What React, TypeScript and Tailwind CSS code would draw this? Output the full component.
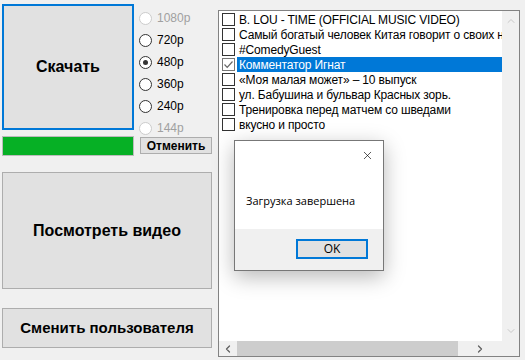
import { ChevronDown, ChevronLeft, ChevronRight, ChevronUp, X } from 'lucide-react';

const qualities = [
  { label: '1080p', disabled: true, checked: false },
  { label: '720p', disabled: false, checked: false },
  { label: '480p', disabled: false, checked: true },
  { label: '360p', disabled: false, checked: false },
  { label: '240p', disabled: false, checked: false },
  { label: '144p', disabled: true, checked: false }
];

const videos = [
  { title: 'B. LOU - TIME (OFFICIAL MUSIC VIDEO)', checked: false },
  { title: 'Самый богатый человек Китая говорит о своих неудачах', checked: false },
  { title: '#ComedyGuest', checked: false },
  { title: 'Комментатор Игнат', checked: true },
  { title: '«Моя малая может» – 10 выпуск', checked: false },
  { title: 'ул. Бабушина и бульвар Красных зорь.', checked: false },
  { title: 'Тренировка перед матчем со шведами', checked: false },
  { title: 'вкусно и просто', checked: false }
];

function Radio({ label, disabled, checked }: { label: string; disabled: boolean; checked: boolean }) {
  return (
    <div className="flex h-[22px] shrink-0 items-center gap-[5px]">
      <span
        className={`flex h-[13px] w-[13px] items-center justify-center rounded-full border bg-white ${
          disabled ? 'border-[#cccccc]' : 'border-[#333333]'
        }`}
      >
        {checked && <span className="h-[5px] w-[5px] rounded-full bg-[#333333]" />}
      </span>
      <span className={`text-[12px] ${disabled ? 'text-[#a0a0a0]' : 'text-black'}`}>{label}</span>
    </div>
  );
}

export default function App() {
  return (
    <div
      className="relative flex h-[360px] w-[525px] overflow-hidden bg-[#f0f0f0] text-black"
      style={{ fontFamily: '"Liberation Sans", Arial, sans-serif' }}
    >
      <div className="flex w-[216px] shrink-0 flex-col pl-[2px] pt-[4px]">
        <div className="flex h-[132px]">
          <button className="flex h-[126px] w-[132px] items-center justify-center border-2 border-[#0078d7] bg-[#e1e1e1] text-[16px] font-bold">
            Скачать
          </button>
          <div className="ml-[5px] flex h-[132px] flex-col overflow-visible pt-[3px]">
            {qualities.map((q) => (
              <Radio key={q.label} {...q} />
            ))}
          </div>
        </div>
        <div className="flex items-start">
          <div className="h-[20px] w-[132px] border border-[#bcbcbc] bg-[#06b025]" />
          <button className="ml-[6px] mt-[1px] flex h-[17px] w-[72px] items-center justify-center border border-[#adadad] bg-[#e1e1e1] text-[12px] font-bold">
            Отменить
          </button>
        </div>
        <button className="mt-[16px] flex h-[117px] w-[210px] items-center justify-center border border-[#adadad] bg-[#e1e1e1] text-[16px] font-bold">
          Посмотреть видео
        </button>
        <button className="mt-[19px] flex h-[40px] w-[210px] items-center justify-center border border-[#adadad] bg-[#e1e1e1] text-[15px] font-bold">
          Сменить пользователя
        </button>
      </div>

      <div className="ml-[2px] mt-[10px] flex h-[347px] w-[302px] flex-col border border-[#828282] bg-white">
        <div className="flex min-h-0 flex-1">
          <div className="min-w-0 flex-1 overflow-hidden pl-[3px] pt-[1px]">
            {videos.map((v) => (
              <div key={v.title} className="flex h-[15px] items-center">
                <span
                  className={`flex h-[13px] w-[13px] shrink-0 items-center justify-center border bg-white ${
                    v.checked ? 'border-[#777777]' : 'border-[#333333]'
                  }`}
                >
                  {v.checked && (
                    <svg width="11" height="11" viewBox="0 0 11 11">
                      <path d="M1.5 5.5 L4.2 8.3 L9.5 2.5" fill="none" stroke="#666666" strokeWidth="1.2" />
                    </svg>
                  )}
                </span>
                <span
                  className={`ml-[2px] flex h-[15px] flex-1 items-center overflow-hidden whitespace-nowrap pl-[2px] text-[12px] tracking-[-0.15px] ${
                    v.checked ? 'bg-[#0078d7] text-white' : 'text-black'
                  }`}
                >
                  {v.title}
                </span>
              </div>
            ))}
          </div>
          <div className="flex w-[17px] shrink-0 flex-col items-center justify-between bg-[#f0f0f0] py-[4px]">
            <ChevronUp size={12} strokeWidth={2} className="text-[#c8c8c8]" />
            <ChevronDown size={12} strokeWidth={2} className="text-[#c8c8c8]" />
          </div>
        </div>
        <div className="flex h-[15px] shrink-0">
          <div className="flex flex-1 items-center bg-[#f0f0f0]">
            <div className="flex w-[18px] justify-center">
              <ChevronLeft size={12} strokeWidth={2.5} className="text-[#606060]" />
            </div>
            <div className="h-full w-[221px] bg-[#cdcdcd]" />
            <div className="flex flex-1 justify-center">
              <ChevronRight size={12} strokeWidth={2.5} className="text-[#606060]" />
            </div>
          </div>
          <div className="w-[17px] bg-[#f0f0f0]" />
        </div>
      </div>

      <div
        className="absolute left-[234px] top-[140px] flex h-[131px] w-[150px] flex-col border border-[#777777] bg-white shadow-[0_6px_20px_rgba(0,0,0,0.28)]"
        style={{ fontFamily: '"Open Sans", "Liberation Sans", sans-serif' }}
      >
        <div className="flex h-[88px] flex-col bg-white">
          <div className="flex justify-end pr-[9px] pt-[8px]">
            <X size={13} strokeWidth={1.2} className="text-black" />
          </div>
          <div className="ml-[11px] mt-[31px] text-[11px]">Загрузка завершена</div>
        </div>
        <div className="flex flex-1 items-start justify-end bg-[#f0f0f0] pr-[15px] pt-[10px]">
          <button className="flex h-[20px] w-[72px] items-center justify-center border-2 border-[#0078d7] bg-[#e1e1e1] text-[12px]">
            OK
          </button>
        </div>
      </div>
    </div>
  );
}
